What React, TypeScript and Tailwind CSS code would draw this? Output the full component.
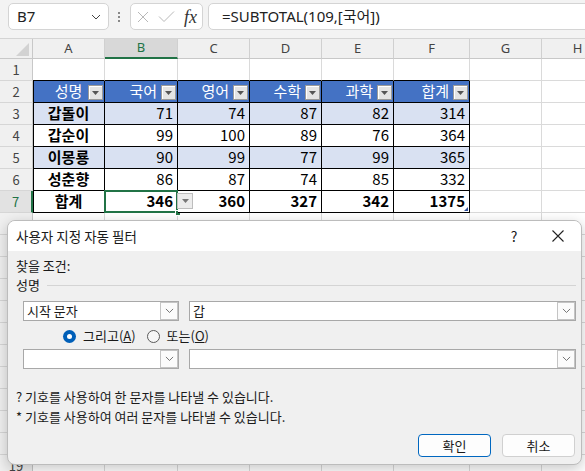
import React from 'react';

const colW = ['w-[72px]', 'w-[73px]', 'w-[72px]', 'w-[72px]', 'w-[72px]', 'w-[76px]', 'w-[72px]', 'w-[72px]'];
const letters = ['A', 'B', 'C', 'D', 'E', 'F', 'G', 'H'];

const table: (string | number)[][] = [
  ['성명', '국어', '영어', '수학', '과학', '합계'],
  ['갑돌이', 71, 74, 87, 82, 314],
  ['갑순이', 99, 100, 89, 76, 364],
  ['이몽룡', 90, 99, 77, 99, 365],
  ['성춘향', 86, 87, 74, 85, 332],
  ['합계', 346, 360, 327, 342, 1375],
];

function FilterBtn() {
  return (
    <span className="absolute right-[1px] bottom-[2px] w-[15px] h-[15px] bg-[#e4e4e4] border border-[#9a9a9a] shadow-[inset_1px_1px_0_#fff] flex items-center justify-center">
      <svg width="7" height="4" viewBox="0 0 7 4">
        <path d="M0 0h7L3.5 4z" fill="#555" />
      </svg>
    </span>
  );
}

function Chevron({ size = 10, color = '#555' }: { size?: number; color?: string }) {
  return (
    <svg width={size} height={size * 0.6} viewBox="0 0 10 6" fill="none">
      <path d="M1 1l4 4 4-4" stroke={color} strokeWidth="1" />
    </svg>
  );
}

function ComboBtn() {
  return (
    <span className="w-[18px] h-[18px] border border-[#c4c4c4] bg-[#fbfbfb] flex items-center justify-center shrink-0">
      <Chevron size={9} color="#666" />
    </span>
  );
}

function TopBar() {
  return (
    <div className="h-[38px] bg-[#f3f3f3] flex items-start pt-[3px] overflow-hidden">
      <div className="ml-[8px] w-[101px] h-[27px] shrink-0 rounded-[5px] border border-[#d4d4d4] bg-white flex items-center justify-between pl-[8px] pr-[7px]">
        <span className="text-[15px] text-[#222]">B7</span>
        <Chevron size={10} color="#444" />
      </div>
      <div className="ml-[8px] w-[4px] h-[27px] shrink-0 flex flex-col items-center justify-center gap-[2px]">
        <span className="w-[2px] h-[2px] bg-[#888]" />
        <span className="w-[2px] h-[2px] bg-[#888]" />
        <span className="w-[2px] h-[2px] bg-[#888]" />
      </div>
      <div className="ml-[9px] w-[73px] h-[27px] shrink-0 rounded-[5px] border border-[#d4d4d4] bg-white flex items-center pl-[6px]">
        <svg width="12" height="12" viewBox="0 0 12 12">
          <path d="M1 1l10 10M11 1L1 11" stroke="#b8b8b8" strokeWidth="1" />
        </svg>
        <svg className="ml-[9px]" width="17" height="11" viewBox="0 0 17 11" fill="none">
          <path d="M1 5.5l5 5L16 0.5" stroke="#b8b8b8" strokeWidth="1" />
        </svg>
        <span className="ml-[9px] font-['Liberation_Serif',serif] italic text-[18px] leading-none text-[#333]">fx</span>
      </div>
      <div className="ml-[5px] w-[400px] h-[27px] shrink-0 rounded-l-[5px] border border-[#d4d4d4] bg-white flex items-center pl-[13px]">
        <span className="text-[15px] text-[#222]">=SUBTOTAL(109,[국어])</span>
      </div>
    </div>
  );
}

function ColumnHeader() {
  return (
    <div className="flex h-[21px] bg-[#f0f0f0] border-t border-[#d4d4d4]">
      <div className="w-[33px] shrink-0 border-r border-b border-[#c8c8c8] relative">
        <svg className="absolute left-[16px] top-[4px]" width="13" height="13" viewBox="0 0 13 13">
          <path d="M13 0V13H0z" fill="#d2d2d2" />
        </svg>
      </div>
      {letters.map((l, i) => (
        <div
          key={l}
          className={`${colW[i]} shrink-0 border-r border-[#d0d0d0] flex items-center justify-center text-[13px] ${
            i === 1 ? 'bg-[#d8d8d8] text-[#217346] border-b-2 border-b-[#217346]' : 'text-[#444] border-b border-b-[#c8c8c8]'
          }`}
        >
          {l}
        </div>
      ))}
    </div>
  );
}

function Cell({ r, c }: { r: number; c: number }) {
  const inTable = r >= 2 && r <= 7 && c <= 5;
  const grid = 'border-[#dadada]';
  if (!inTable) {
    const aboveTable = r === 1 && c <= 5;
    return (
      <div
        className={`${colW[c]} shrink-0 h-[22px] border-r border-b ${grid} ${aboveTable ? 'border-b-black' : ''}`}
      />
    );
  }
  const v = table[r - 2][c];
  const leftEdge = c === 0 ? 'shadow-[inset_1px_0_0_#000]' : '';
  if (r === 2) {
    return (
      <div
        className={`${colW[c]} shrink-0 h-[22px] relative border-r border-b border-black bg-[#4472c4] text-white flex items-center ${leftEdge} ${
          c === 0 ? 'justify-center' : 'justify-end pr-[20px]'
        }`}
      >
        {v}
        <FilterBtn />
      </div>
    );
  }
  const band = r === 3 || r === 5 ? 'bg-[#d9e1f2]' : 'bg-white';
  const bold = c === 0 || r === 7 ? 'font-bold' : '';
  return (
    <div
      className={`${colW[c]} shrink-0 h-[22px] relative border-r border-b border-black ${band} ${bold} text-black flex items-center ${leftEdge} ${
        c === 0 ? 'justify-center' : 'justify-end pr-[4px]'
      }`}
    >
      {v}
      {r === 7 && c === 1 && (
        <>
          <span className="absolute -left-[1px] -top-[1px] -right-[1px] -bottom-[1px] border-2 border-[#217346]" />
          <span className="absolute -right-[4px] -bottom-[4px] w-[6px] h-[6px] bg-[#217346] border border-white" />
          <span className="absolute left-[72px] top-[2px] w-[16px] h-[16px] bg-[#ececec] border border-[#bdbdbd] flex items-center justify-center z-10">
            <svg width="7" height="4" viewBox="0 0 7 4">
              <path d="M0 0h7L3.5 4z" fill="#777" />
            </svg>
          </span>
        </>
      )}
      {r === 7 && c === 5 && (
        <svg className="absolute right-[1px] bottom-[1px]" width="4" height="4" viewBox="0 0 4 4">
          <path d="M4 0V4H0z" fill="#2f4f9a" />
        </svg>
      )}
    </div>
  );
}

function Sheet() {
  const rows = Array.from({ length: 19 }, (_, i) => i + 1);
  return (
    <div className="flex flex-col font-['Noto_Sans_CJK_KR','Noto_Sans',sans-serif] text-[15px]">
      {rows.map((r) => (
        <div key={r} className="flex h-[22px]">
          <div
            className={`w-[33px] shrink-0 h-[22px] border-b border-b-[#d6d6d6] flex items-center justify-center text-[13px] ${
              r === 7
                ? 'bg-[#e2e2e2] text-[#217346] border-r-2 border-r-[#217346]'
                : 'bg-[#f0f0f0] text-[#444] border-r border-r-[#c8c8c8]'
            }`}
          >
            {/* rows 8-18 sit under the dialog */}
            {r <= 7 || r === 19 ? r : ''}
          </div>
          {letters.map((_, c) => (
            <Cell key={c} r={r} c={c} />
          ))}
        </div>
      ))}
    </div>
  );
}

function Dialog() {
  return (
    <div className="absolute left-[7px] top-[220px] w-[575px] h-[245px] rounded-[8px] border border-[#bcbcbc] bg-[#f0f0f0] shadow-[0_4px_14px_rgba(0,0,0,0.22)] overflow-hidden text-[13px] leading-[18px] text-[#1a1a1a] font-['Noto_Sans_CJK_KR','Noto_Sans',sans-serif]">
      <div className="h-[30px] bg-white flex items-center pl-[8px]">
        <span className="text-[13.5px]">사용자 지정 자동 필터</span>
        <span className="ml-auto text-[14px] w-[16px] text-center mr-[30px]">?</span>
        <svg className="mr-[17px]" width="12" height="12" viewBox="0 0 12 12">
          <path d="M0.5 0.5l11 11M11.5 0.5l-11 11" stroke="#222" strokeWidth="1.1" />
        </svg>
      </div>
      <div className="flex flex-col">
        <div className="mt-[5px] h-[20px] pl-[8px] flex items-center">찾을 조건:</div>
        <div className="h-[18px] pl-[8px] pr-[5px] flex items-center gap-[7px]">
          <span>성명</span>
          <span className="flex-1 h-px bg-[#d4d4d4]" />
        </div>
        <div className="mt-[7px] h-[20px] pl-[15px] flex gap-[10px]">
          <div className="w-[156px] h-[20px] border border-[#a8a8a8] bg-white flex items-center justify-between pl-[3px]">
            <span>시작 문자</span>
            <ComboBtn />
          </div>
          <div className="w-[387px] h-[20px] border border-[#a8a8a8] bg-white flex items-center justify-between pl-[3px]">
            <span>갑</span>
            <ComboBtn />
          </div>
        </div>
        <div className="mt-[5px] h-[20px] pl-[55px] flex items-center">
          <span className="w-[13px] h-[13px] rounded-full bg-[#005fb8] flex items-center justify-center">
            <span className="w-[5px] h-[5px] rounded-full bg-white" />
          </span>
          <span className="ml-[7px]">
            그리고(<u>A</u>)
          </span>
          <span className="ml-[11px] w-[13px] h-[13px] rounded-full border border-[#5a5a5a] bg-[#f7f7f7]" />
          <span className="ml-[7px]">
            또는(<u>O</u>)
          </span>
        </div>
        <div className="mt-[3px] h-[20px] pl-[15px] flex gap-[10px]">
          <div className="w-[156px] h-[20px] border border-[#a8a8a8] bg-white flex items-center justify-end">
            <ComboBtn />
          </div>
          <div className="w-[387px] h-[20px] border border-[#a8a8a8] bg-white flex items-center justify-end">
            <ComboBtn />
          </div>
        </div>
        <div className="mt-[18px] h-[20px] pl-[8px] flex items-center">? 기호를 사용하여 한 문자를 나타낼 수 있습니다.</div>
        <div className="h-[20px] pl-[8px] flex items-center">* 기호를 사용하여 여러 문자를 나타낼 수 있습니다.</div>
        <div className="mt-[7px] h-[23px] pr-[6px] flex justify-end gap-[11px]">
          <button className="w-[73px] h-[23px] rounded-[4px] border border-[#0067c0] bg-[#fdfdfd]">확인</button>
          <button className="w-[73px] h-[23px] rounded-[4px] border border-[#d0d0d0] bg-[#fdfdfd]">취소</button>
        </div>
      </div>
    </div>
  );
}

export default function App() {
  return (
    <div className="relative w-[585px] h-[471px] overflow-hidden bg-white font-['Noto_Sans','Noto_Sans_CJK_KR',sans-serif]">
      <TopBar />
      <ColumnHeader />
      <Sheet />
      <Dialog />
    </div>
  );
}
